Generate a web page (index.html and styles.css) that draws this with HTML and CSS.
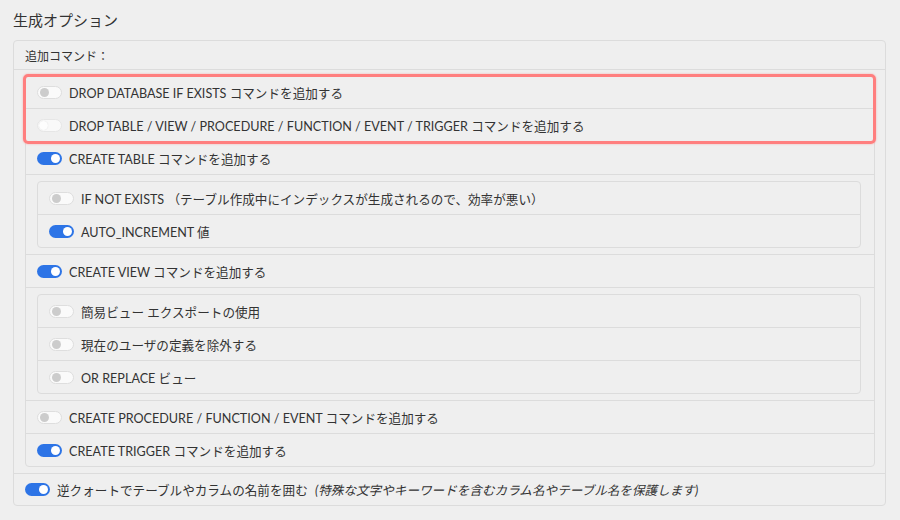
FILE: index.html
```html
<!DOCTYPE html>
<html lang="ja">
<head>
<meta charset="utf-8">
<link rel="stylesheet" href="styles.css">
</head>
<body>
<h2 class="title">生成オプション</h2>
<div class="panel">
  <div class="panel-heading">追加コマンド：</div>
  <div class="panel-body">
    <div class="list">
      <div class="highlight">
        <div class="row"><span class="toggle off"></span><span>DROP DATABASE IF EXISTS コマンドを追加する</span></div>
        <div class="row"><span class="toggle disabled"></span><span>DROP TABLE / VIEW / PROCEDURE / FUNCTION / EVENT / TRIGGER コマンドを追加する</span></div>
      </div>
      <div class="row"><span class="toggle on"></span><span>CREATE TABLE コマンドを追加する</span></div>
      <div class="nest-item">
        <div class="list nested">
          <div class="row"><span class="toggle off"></span><span>IF NOT EXISTS （テーブル作成中にインデックスが生成されるので、効率が悪い）</span></div>
          <div class="row"><span class="toggle on"></span><span>AUTO_INCREMENT 値</span></div>
        </div>
      </div>
      <div class="row"><span class="toggle on"></span><span>CREATE VIEW コマンドを追加する</span></div>
      <div class="nest-item">
        <div class="list nested">
          <div class="row"><span class="toggle off"></span><span>簡易ビュー エクスポートの使用</span></div>
          <div class="row"><span class="toggle off"></span><span>現在のユーザの定義を除外する</span></div>
          <div class="row"><span class="toggle off"></span><span>OR REPLACE ビュー</span></div>
        </div>
      </div>
      <div class="row"><span class="toggle off"></span><span>CREATE PROCEDURE / FUNCTION / EVENT コマンドを追加する</span></div>
      <div class="row"><span class="toggle on"></span><span>CREATE TRIGGER コマンドを追加する</span></div>
    </div>
  </div>
  <div class="panel-footer"><span class="toggle on"></span><span>逆クォートでテーブルやカラムの名前を囲む <em>(特殊な文字やキーワードを含むカラム名やテーブル名を保護します)</em></span></div>
</div>
</body>
</html>
```

FILE: styles.css
```css
* { box-sizing: border-box; }
html, body { margin: 0; padding: 0; }
body {
  background: #efefef;
  color: #333;
  font-family: Lato, "Noto Sans CJK JP", sans-serif;
  font-size: 12.6px;
  padding: 0 14px 0 13px;
  width: 900px;
  height: 520px;
  overflow: hidden;
}
.title {
  font-size: 15px;
  font-weight: normal;
  line-height: 20px;
  margin: 10px 0 10px 0;
  color: #333;
}
.panel {
  border: 1px solid #dcdcdc;
  border-radius: 4px;
}
.panel-heading {
  height: 29px;
  display: flex;
  align-items: center;
  padding-left: 11px;
  border-bottom: 1px solid #dcdcdc;
  font-size: 12px;
}
.panel-body {
  padding: 5px 10px 6px 11px;
}
.list {
  border: 1px solid #dcdcdc;
  border-radius: 4px;
}
.row {
  height: 33px;
  display: flex;
  align-items: center;
  padding-left: 11px;
  border-top: 1px solid #dcdcdc;
  white-space: nowrap;
}
.list > .row:first-child,
.highlight > .row:first-child { border-top: none; height: 32px; }
.nested > .row:first-child { height: 32px; }
.highlight {
  position: relative;
}
.highlight::after {
  content: "";
  position: absolute;
  top: -2px;
  left: -3px;
  right: -2px;
  bottom: -3px;
  border: 3px solid #ff7f7f;
  border-radius: 5px;
  box-shadow: 0 0 2px rgba(255, 120, 120, 0.6);
  pointer-events: none;
}
.nest-item {
  border-top: 1px solid #dcdcdc;
  padding: 6px 13px 6px 11px;
}
.nested .row { padding-left: 11px; }
.toggle {
  position: relative;
  display: inline-block;
  width: 25px;
  height: 13px;
  border-radius: 7px;
  margin-right: 7px;
  flex: none;
}
.toggle::after {
  content: "";
  position: absolute;
  top: 2px;
  width: 9px;
  height: 9px;
  border-radius: 50%;
}
.toggle.on {
  background: #2d74e6;
}
.toggle.on::after {
  right: 2px;
  background: #fff;
}
.toggle.off {
  background: #fafafa;
  border: 1px solid #dedede;
}
.toggle.off::after {
  top: 1px;
  left: 2px;
  background: #cccccc;
}
.toggle.disabled {
  background: #f9f9f9;
  border: 1px solid #e6e6e6;
}
.toggle.disabled::after {
  top: 1px;
  left: 1px;
  background: #fdfdfd;
  box-shadow: 0 0 1px #d8d8d8;
}
.panel-footer {
  height: 32px;
  display: flex;
  align-items: center;
  padding-left: 11px;
  border-top: 1px solid #dcdcdc;
  white-space: nowrap;
}
.panel-footer em { font-style: italic; margin-left: 4px; }
```
